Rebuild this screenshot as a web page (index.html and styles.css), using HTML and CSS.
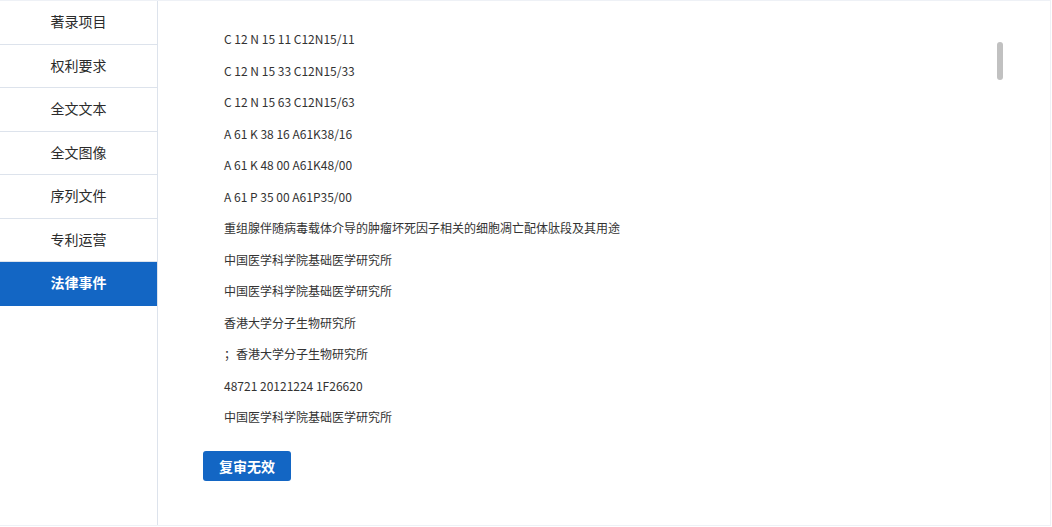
FILE: index.html
```html
<!DOCTYPE html>
<html lang="zh-CN">
<head>
    <meta charset="UTF-8">
    <meta name="viewport" content="width=device-width, initial-scale=1.0">
    <title>法律事件</title>
    <link rel="stylesheet" href="styles.css">
</head>
<body>
    <div class="frame">
        <div class="side_menu">
            <div class="menu_item">著录项目</div>
            <div class="menu_item">权利要求</div>
            <div class="menu_item">全文文本</div>
            <div class="menu_item">全文图像</div>
            <div class="menu_item">序列文件</div>
            <div class="menu_item">专利运营</div>
            <div class="menu_item active">法律事件</div>
        </div>
        <div class="detail">
            <div class="rows">
                <p class="row">C 12 N 15 11 C12N15/11</p>
                <p class="row">C 12 N 15 33 C12N15/33</p>
                <p class="row">C 12 N 15 63 C12N15/63</p>
                <p class="row">A 61 K 38 16 A61K38/16</p>
                <p class="row">A 61 K 48 00 A61K48/00</p>
                <p class="row">A 61 P 35 00 A61P35/00</p>
                <p class="row">重组腺伴随病毒载体介导的肿瘤坏死因子相关的细胞凋亡配体肽段及其用途</p>
                <p class="row">中国医学科学院基础医学研究所</p>
                <p class="row">中国医学科学院基础医学研究所</p>
                <p class="row">香港大学分子生物研究所</p>
                <p class="row">；香港大学分子生物研究所</p>
                <p class="row">48721 20121224 1F26620</p>
                <p class="row">中国医学科学院基础医学研究所</p>
            </div>
            <button class="event_btn">复审无效</button>
            <div class="scroll_thumb"></div>
        </div>
    </div>
</body>
</html>
```

FILE: styles.css
```css
body{
    margin:0;
    background:#fff;
    font-family:"Noto Sans CJK SC", "Noto Sans", sans-serif;
    color:#333;
}
.frame{
    width:1051px;
    height:526px;
    display:flex;
    border-top:1px solid #eef1f6;
    border-right:1px solid #eef1f6;
    border-bottom:1px solid #eef1f6;
    box-sizing:border-box;
}
.side_menu{
    width:158px;
    flex:none;
    border-right:1px solid #dde3ec;
    box-sizing:border-box;
}
.menu_item{
    height:42.5px;
    line-height:41.5px;
    border-bottom:1px solid #dde3ec;
    text-align:center;
    font-size:14px;
    font-weight:400;
    color:#2b2b2b;
}
.menu_item.active{
    background:#1366c4;
    color:#fff;
    font-weight:700;
    border-bottom-color:#1366c4;
}
.detail{
    position:relative;
    flex:1;
    padding:22px 0 0 45px;
}
.rows{
    padding-left:21px;
}
.row{
    margin:0;
    height:31.5px;
    line-height:31.5px;
    font-size:12px;
    color:#333;
}
.event_btn{
    margin-top:18px;
    width:88px;
    height:30px;
    border:none;
    border-radius:3px;
    background:#1366c4;
    color:#fff;
    font-family:inherit;
    font-size:14px;
    font-weight:700;
    padding:0;
}
.scroll_thumb{
    position:absolute;
    left:839px;
    top:41px;
    width:6px;
    height:38px;
    border-radius:3px;
    background:#c1c1c1;
}
```
